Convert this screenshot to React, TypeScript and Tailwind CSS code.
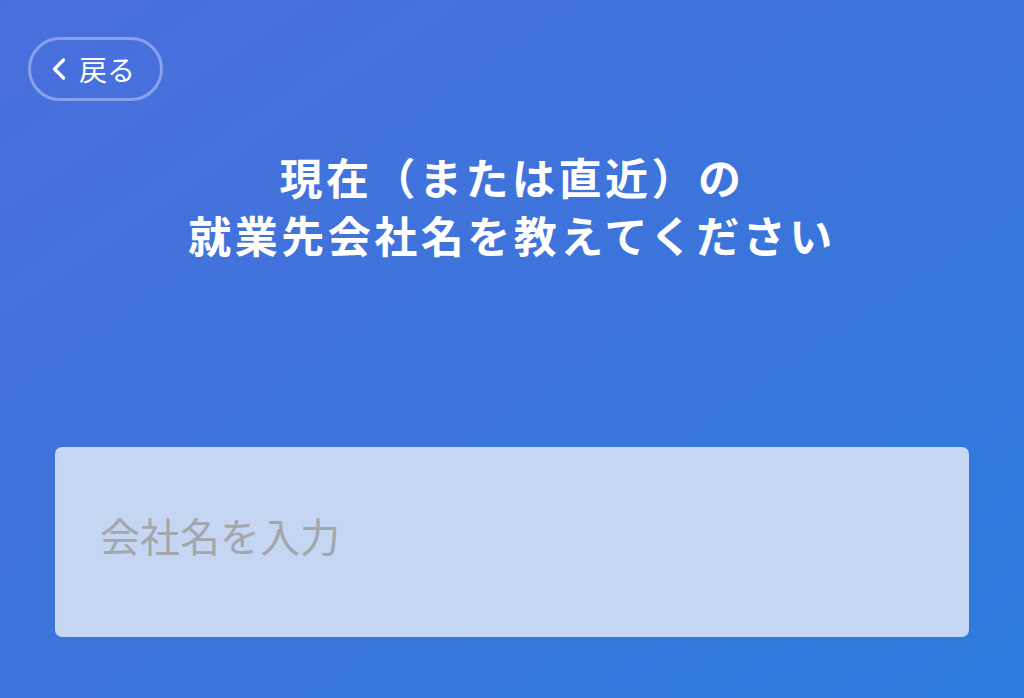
import { ChevronLeft } from "lucide-react";

export default function App() {
  return (
    <div
      className="w-[1024px] h-[698px] overflow-hidden bg-gradient-to-br from-[#4a6fdd] via-[#3c74db] to-[#2c7cdd] flex flex-col"
      style={{ fontFamily: '"Noto Sans CJK JP", "Noto Sans", sans-serif' }}
    >
      <div className="pl-[28px] pt-[37px]">
        <button className="flex items-center h-[64px] w-[135px] rounded-full border-[3px] border-white/35 text-white pl-[10px]">
          <ChevronLeft className="w-[36px] h-[36px]" strokeWidth={2.2} />
          <span className="ml-[2px] text-[28px] leading-none">戻る</span>
        </button>
      </div>

      <h1 className="mt-[46px] text-center text-white font-bold text-[43px] leading-[58px] tracking-[3.5px]">
        現在（または直近）の
        <br />
        就業先会社名を教えてください
      </h1>

      <div className="mt-[184px] mx-[55px] h-[190px] rounded-[7px] bg-[#c5d6f3] flex items-center px-[45px] pb-[14px]">
        <input
          placeholder="会社名を入力"
          className="w-full bg-transparent outline-none text-[40px] text-gray-700 placeholder:text-[#a3a7ad]"
        />
      </div>
    </div>
  );
}
